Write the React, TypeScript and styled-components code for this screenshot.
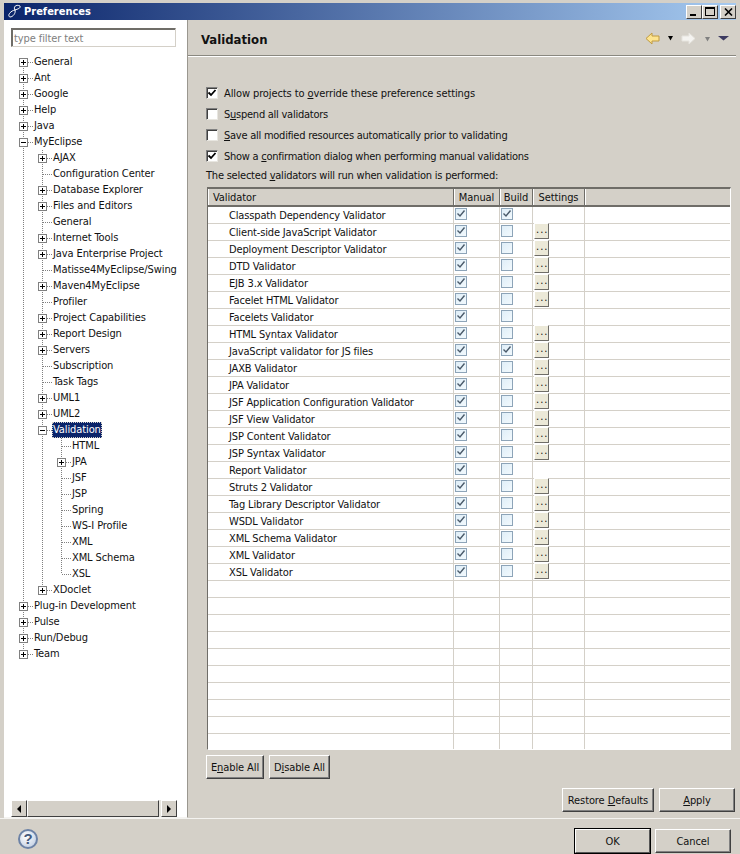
import React from "react";
import styled, { createGlobalStyle } from "styled-components";

const Global = createGlobalStyle`
  html, body { margin: 0; padding: 0; background: #d4d0c8; }
  * { box-sizing: border-box; }
  u { text-underline-offset: 1px; }
`;

const FONT = `"DejaVu Sans Condensed", "Liberation Sans", sans-serif`;

const Win = styled.div`
  width: 740px; height: 854px; overflow: hidden;
  padding: 3px 4px 0;
  background: #d4d0c8;
  font: 11px/16px ${FONT};
  letter-spacing: -0.1px;
  color: #111;
  display: flex; flex-direction: column;
`;
const TitleBar = styled.div`
  height: 17px; flex: none;
  background: linear-gradient(to right, #0a246a, #a6caf0);
  display: flex; align-items: center;
  padding: 0 0 0 3px;
  color: #fff; font-weight: 700; font-size: 11px; letter-spacing: 0;
`;
const TitleText = styled.span`margin-left: 1px; flex: 1;`;
const WinBtn = styled.div<{ $gap?: boolean }>`
  width: 16px; height: 14px; margin-left: ${p => (p.$gap ? 2 : 0)}px;
  background: #d4d0c8;
  border: 1px solid; border-color: #fff #404040 #404040 #fff;
  display: flex; align-items: center; justify-content: center;
`;
const Body = styled.div`flex: none; height: 798px; display: flex;`;
const Side = styled.div`
  width: 184px; flex: none; background: #fff;
  border-right: 1px solid #9a978f;
  border-bottom: 1px solid #f4f3f0;
  display: flex; flex-direction: column;
  padding: 8px 10px 0 7px;
`;
const Filter = styled.div`
  width: 165px; height: 19px; flex: none;
  border: 1px solid; border-color: #6f6d68 #d4d0c8 #d4d0c8 #6f6d68;
  box-shadow: inset 1px 1px 0 #6f6d68;
  color: #808080; padding-left: 2px; line-height: 19px;
`;
const Tree = styled.div`flex: 1; padding: 7px 0 0 3px; min-height: 0;`;
const Row = styled.div`display: flex; height: 16px; align-items: stretch;`;
type Kind = "none" | "full" | "mid" | "end" | "start";
const V = `repeating-linear-gradient(to bottom, #808080 0 1px, transparent 1px 2px)`;
const H = `repeating-linear-gradient(to right, #808080 0 1px, transparent 1px 2px)`;
const Cell = styled.div<{ $k: Kind }>`
  width: 19px; flex: none; position: relative;
  display: flex; align-items: center; justify-content: center;
  background-repeat: no-repeat;
  ${p => p.$k === "none" ? "" : p.$k === "full" ? `background-image: ${V}; background-size: 1px 100%; background-position: 9px 0;`
    : p.$k === "mid" ? `background-image: ${V}, ${H}; background-size: 1px 100%, 10px 1px; background-position: 9px 0, 10px 8px;`
    : p.$k === "end" ? `background-image: ${V}, ${H}; background-size: 1px 8px, 10px 1px; background-position: 9px 0, 10px 8px;`
    : `background-image: ${V}, ${H}; background-size: 1px 8px, 10px 1px; background-position: 9px 8px, 10px 8px;`}
`;
const Exp = styled.div<{ $open?: boolean }>`
  width: 9px; height: 9px; background: #fff; border: 1px solid #808080;
  margin-right: 1px; margin-top: 1px;
  background-image: linear-gradient(#000, #000)${p => (p.$open ? "" : ", linear-gradient(#000, #000)")};
  background-repeat: no-repeat;
  background-size: 5px 1px${p => (p.$open ? "" : ", 1px 5px")};
  background-position: 1px 3px${p => (p.$open ? "" : ", 3px 1px")};
`;
const Label = styled.div<{ $sel?: boolean }>`
  margin-left: 0; padding: 0 1px; height: 16px; line-height: 16px; white-space: nowrap;
  ${p => p.$sel ? `background: #0a246a; color: #fff; outline: 1px dotted #d4d0c8; outline-offset: -1px;` : ""}
`;
const HScroll = styled.div`
  flex: none; height: 17px; width: 166px; display: flex; background: #e8e6e0;
`;
const ScrollBtn = styled.div`
  width: 16px; flex: none; background: #d4d0c8;
  border: 1px solid; border-color: #fff #404040 #404040 #fff;
  display: flex; align-items: center; justify-content: center;
`;
const Thumb = styled.div`
  width: 132px; flex: none; background: #d4d0c8;
  border: 1px solid; border-color: #fff #404040 #404040 #fff;
`;
const Tri = styled.span<{ $r?: boolean }>`
  width: 0; height: 0; border: 4px solid transparent; border-left-width: 0; border-right-width: 0;
  ${p => p.$r ? "border-left: 4px solid #000;" : "border-right: 4px solid #000;"}
`;
const Main = styled.div`flex: 1; min-width: 0; display: flex; flex-direction: column;`;
const Head = styled.div`
  height: 36px; flex: none; display: flex; align-items: center;
  border-bottom: 1px solid #8a8880; box-shadow: 0 1px 0 #fff;
  padding: 2px 7px 0 13px;
`;
const HeadTitle = styled.div`flex: 1; font-weight: 700; font-size: 13px; padding-top: 2px; letter-spacing: 0;`;
const Nav = styled.div`display: flex; align-items: center; gap: 8px;`;
const NavWide = styled.span`margin-left: 1px;`;
const Content = styled.div`
  flex: 1; display: flex; flex-direction: column; padding: 26px 0 0 18px; min-height: 0;
`;
const Check = styled.div<{ $loose?: boolean }>`
  display: flex; align-items: center; height: 21px; gap: 6px; margin-left: 0; white-space: nowrap;
  letter-spacing: ${p => (p.$loose ? -0.1 : -0.25)}px;
`;
const CheckText = styled.span`display: block; margin-top: 2px;`;
const Box = styled.div`
  width: 12px; height: 12px; flex: none; background: #fff;
  border: 1px solid; border-color: #808080 #e8e6e0 #e8e6e0 #808080;
  box-shadow: inset 1px 1px 0 #404040;
  display: flex; align-items: center; justify-content: center;
`;
const Note = styled.div`height: 16px; margin: 2px 0 3px 0; white-space: nowrap; letter-spacing: -0.22px;`;
const Table = styled.div`
  width: 524px; height: 563px; margin-left: 1px; flex: none; overflow: hidden;
  border: 1px solid; border-color: #6f6d68 #fff #fff #6f6d68;
  border-top-width: 2px; background: #fff;
`;
const COLS = "246px 46px 33px 52px 1fr";
const HeadRow = styled.div`
  display: grid; grid-template-columns: ${COLS}; height: 18px;
  background: #d4d0c8; border-bottom: 2px solid #6f6d68;
`;
const HCell = styled.div<{ $center?: boolean }>`
  border-right: 1px solid #6f6d68; box-shadow: inset 1px 0 0 #fff;
  text-align: ${p => (p.$center ? "center" : "left")};
  padding: 1px 0 0 ${p => (p.$center ? 0 : 5)}px; line-height: 15px; white-space: nowrap;
  &:last-child { border-right: none; }
`;
const TRow = styled.div`
  display: grid; grid-template-columns: ${COLS}; height: 17px;
  border-bottom: 1px solid #d4d0c8;
`;
const TCell = styled.div<{ $name?: boolean }>`
  border-right: 1px solid #d4d0c8;
  padding: ${p => (p.$name ? "2px 0 0 21px" : "0 0 0 1px")};
  line-height: 14px; white-space: nowrap; display: flex; align-items: center;
  letter-spacing: -0.15px;
  &:last-child { border-right: none; }
`;
const MiniBox = styled.div`
  width: 12px; height: 12px; background: linear-gradient(135deg, #dfeef8, #f2f9fd);
  border: 1px solid #8da4b8; display: flex; align-items: center; justify-content: center;
  margin-top: -2px;
`;
const Dots = styled.div`
  width: 15px; height: 16px; background: #ece9d8; margin-top: -1px; align-self: flex-start;
  border: 1px solid; border-color: #fff #6f6d68 #6f6d68 #fff;
  font-size: 11px; line-height: 11px; text-align: center; letter-spacing: 1px; padding-left: 1px;
`;
const Btn = styled.div<{ $w: number; $def?: boolean }>`
  width: ${p => p.$w}px; height: 24px; flex: none; background: #d4d0c8; padding-top: 2px;
  display: flex; align-items: center; justify-content: center; white-space: nowrap;
  border: 1px solid; border-color: #fff #404040 #404040 #fff;
  ${p => p.$def ? "outline: 1px solid #000; outline-offset: 0; border-color: #fff #555 #555 #fff;" : "box-shadow: inset -1px -1px 0 #808080;"}
`;
const BtnRowLeft = styled.div`display: flex; gap: 5px; margin-top: 5px;`;
const BtnRowRight = styled.div`display: flex; gap: 5px; justify-content: flex-end; margin-top: 9px; padding-right: 1px;`;
const Footer = styled.div`
  flex: 1; display: flex; align-items: flex-start; border-top: 1px solid #f4f3f0;
  margin: 0 -4px; padding: 10px 9px 0 18px;
`;
const Help = styled.div`
  width: 20px; height: 20px; border-radius: 50%; flex: none;
  background: radial-gradient(circle at 40% 35%, #fff, #cdd8e8 70%);
  border: 2px solid #6c82a6; color: #44597c;
  font: 700 15px/16px "Liberation Sans", sans-serif; text-align: center;
`;
const Spacer = styled.div`flex: 1;`;
const FootBtns = styled.div`display: flex; gap: 5px;`;

const tree: { t: string; c: Kind[]; e?: "+" | "-"; sel?: boolean }[] = [
  { t: "General", c: ["start"], e: "+" },
  { t: "Ant", c: ["mid"], e: "+" },
  { t: "Google", c: ["mid"], e: "+" },
  { t: "Help", c: ["mid"], e: "+" },
  { t: "Java", c: ["mid"], e: "+" },
  { t: "MyEclipse", c: ["mid"], e: "-" },
  { t: "AJAX", c: ["full", "mid"], e: "+" },
  { t: "Configuration Center", c: ["full", "mid"] },
  { t: "Database Explorer", c: ["full", "mid"], e: "+" },
  { t: "Files and Editors", c: ["full", "mid"], e: "+" },
  { t: "General", c: ["full", "mid"] },
  { t: "Internet Tools", c: ["full", "mid"], e: "+" },
  { t: "Java Enterprise Project", c: ["full", "mid"], e: "+" },
  { t: "Matisse4MyEclipse/Swing", c: ["full", "mid"] },
  { t: "Maven4MyEclipse", c: ["full", "mid"], e: "+" },
  { t: "Profiler", c: ["full", "mid"] },
  { t: "Project Capabilities", c: ["full", "mid"], e: "+" },
  { t: "Report Design", c: ["full", "mid"], e: "+" },
  { t: "Servers", c: ["full", "mid"], e: "+" },
  { t: "Subscription", c: ["full", "mid"] },
  { t: "Task Tags", c: ["full", "mid"] },
  { t: "UML1", c: ["full", "mid"], e: "+" },
  { t: "UML2", c: ["full", "mid"], e: "+" },
  { t: "Validation", c: ["full", "mid"], e: "-", sel: true },
  { t: "HTML", c: ["full", "full", "mid"] },
  { t: "JPA", c: ["full", "full", "mid"], e: "+" },
  { t: "JSF", c: ["full", "full", "mid"] },
  { t: "JSP", c: ["full", "full", "mid"] },
  { t: "Spring", c: ["full", "full", "mid"] },
  { t: "WS-I Profile", c: ["full", "full", "mid"] },
  { t: "XML", c: ["full", "full", "mid"] },
  { t: "XML Schema", c: ["full", "full", "mid"] },
  { t: "XSL", c: ["full", "full", "end"] },
  { t: "XDoclet", c: ["full", "end"], e: "+" },
  { t: "Plug-in Development", c: ["mid"], e: "+" },
  { t: "Pulse", c: ["mid"], e: "+" },
  { t: "Run/Debug", c: ["mid"], e: "+" },
  { t: "Team", c: ["end"], e: "+" },
];

const validators: [string, boolean, boolean][] = [
  ["Classpath Dependency Validator", true, false],
  ["Client-side JavaScript Validator", false, true],
  ["Deployment Descriptor Validator", false, true],
  ["DTD Validator", false, true],
  ["EJB 3.x Validator", false, true],
  ["Facelet HTML Validator", false, true],
  ["Facelets Validator", false, false],
  ["HTML Syntax Validator", false, true],
  ["JavaScript validator for JS files", true, true],
  ["JAXB Validator", false, true],
  ["JPA Validator", false, true],
  ["JSF Application Configuration Validator", false, true],
  ["JSF View Validator", false, true],
  ["JSP Content Validator", false, true],
  ["JSP Syntax Validator", false, true],
  ["Report Validator", false, false],
  ["Struts 2 Validator", false, true],
  ["Tag Library Descriptor Validator", false, true],
  ["WSDL Validator", false, true],
  ["XML Schema Validator", false, true],
  ["XML Validator", false, true],
  ["XSL Validator", false, true],
];

const Tick = ({ c = "#000" }: { c?: string }) => (
  <svg width="10" height="10" viewBox="0 0 10 10"><path d="M1.5 4.5 L4 7 L8.5 2" fill="none" stroke={c} strokeWidth="1.8" /></svg>
);
const MiniTick = () => (
  <svg width="10" height="10" viewBox="0 0 10 10"><path d="M1.5 4.5 L4 7 L8.5 1.5" fill="none" stroke="#4a5a6a" strokeWidth="1.4" /></svg>
);
const Drop = ({ c, w = 7 }: { c: string; w?: number }) => (
  <svg width={w} height="5" viewBox={`0 0 ${w} 5`}><path d={`M0 0 H${w} L${w / 2} 4.5 Z`} fill={c} /></svg>
);
const Arrow = ({ fill, stroke, flip }: { fill: string; stroke: string; flip?: boolean }) => (
  <svg width="15" height="13" viewBox="0 0 15 13" style={{ transform: flip ? "scaleX(-1)" : undefined }}>
    <path d="M1 6.5 L7 1 V4 H14 V9 H7 V12 Z" fill={fill} stroke={stroke} strokeWidth="1" />
  </svg>
);

export default function App() {
  return (
    <Win>
      <Global />
      <TitleBar>
        <svg width="16" height="15" viewBox="0 0 16 15">
          <path d="M13 2 C9 0 6 3 8 6 C9 9 6 13 3 13 C0 12 3 7 8 6 C11 5 14 4 13 2 Z" fill="none" stroke="#fff" strokeWidth="1" />
        </svg>
        <TitleText>Preferences</TitleText>
        <WinBtn><svg width="8" height="8"><rect x="0" y="6" width="6" height="2" fill="#000" /></svg></WinBtn>
        <WinBtn><svg width="10" height="9"><rect x="0.5" y="1" width="9" height="7.5" fill="none" stroke="#000" /><rect y="0" width="10" height="2" fill="#000" /></svg></WinBtn>
        <WinBtn $gap><svg width="9" height="8"><path d="M1 0.5 L8 7.5 M8 0.5 L1 7.5" stroke="#000" strokeWidth="1.6" /></svg></WinBtn>
      </TitleBar>
      <Body>
        <Side>
          <Filter>type filter text</Filter>
          <Tree>
            {tree.map((n, i) => (
              <Row key={i}>
                {n.c.map((k, j) => (
                  <Cell key={j} $k={k}>
                    {j === n.c.length - 1 && n.e ? <Exp $open={n.e === "-"} /> : null}
                  </Cell>
                ))}
                <Label $sel={n.sel}>{n.t}</Label>
              </Row>
            ))}
          </Tree>
          <HScroll>
            <ScrollBtn><Tri /></ScrollBtn>
            <Thumb />
            <Spacer />
            <ScrollBtn><Tri $r /></ScrollBtn>
          </HScroll>
        </Side>
        <Main>
          <Head>
            <HeadTitle>Validation</HeadTitle>
            <Nav>
              <Arrow fill="#fde48f" stroke="#c09a40" />
              <Drop c="#000" w={5} />
              <Arrow fill="#f4f3f0" stroke="#e6e4de" flip />
              <NavWide><Drop c="#808080" w={5} /></NavWide>
              <Drop c="#3c3a60" w={11} />
            </Nav>
          </Head>
          <Content>
            <Check $loose><Box><Tick /></Box><CheckText>Allow projects to <u>o</u>verride these preference settings</CheckText></Check>
            <Check><Box /><CheckText>S<u>u</u>spend all validators</CheckText></Check>
            <Check><Box /><CheckText><u>S</u>ave all modified resources automatically prior to validating</CheckText></Check>
            <Check><Box><Tick /></Box><CheckText>Show a <u>c</u>onfirmation dialog when performing manual validations</CheckText></Check>
            <Note>The selected <u>v</u>alidators will run when validation is performed:</Note>
            <Table>
              <HeadRow>
                <HCell>Validator</HCell>
                <HCell $center>Manual</HCell>
                <HCell $center>Build</HCell>
                <HCell $center>Settings</HCell>
                <HCell />
              </HeadRow>
              {Array.from({ length: 32 }).map((_, i) => {
                const v = validators[i];
                return (
                  <TRow key={i}>
                    <TCell $name>{v ? v[0] : ""}</TCell>
                    <TCell>{v ? <MiniBox><MiniTick /></MiniBox> : null}</TCell>
                    <TCell>{v ? <MiniBox>{v[1] ? <MiniTick /> : null}</MiniBox> : null}</TCell>
                    <TCell>{v && v[2] ? <Dots>...</Dots> : null}</TCell>
                    <TCell />
                  </TRow>
                );
              })}
            </Table>
            <BtnRowLeft>
              <Btn $w={58}><span>E<u>n</u>able All</span></Btn>
              <Btn $w={61}><span>D<u>i</u>sable All</span></Btn>
            </BtnRowLeft>
            <BtnRowRight>
              <Btn $w={92}><span>Restore <u>D</u>efaults</span></Btn>
              <Btn $w={76}><span><u>A</u>pply</span></Btn>
            </BtnRowRight>
          </Content>
        </Main>
      </Body>
      <Footer>
        <Help>?</Help>
        <Spacer />
        <FootBtns>
          <Btn $w={75} $def>OK</Btn>
          <Btn $w={76}>Cancel</Btn>
        </FootBtns>
      </Footer>
    </Win>
  );
}
